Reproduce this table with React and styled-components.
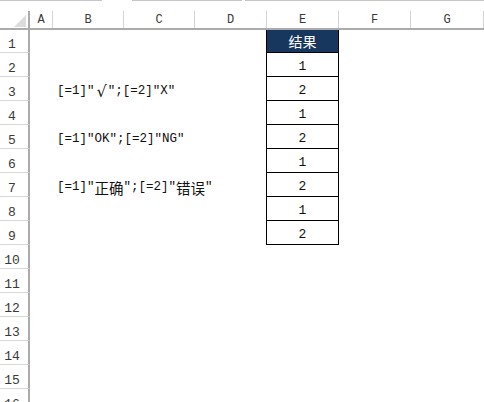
import React from 'react';
import styled, { createGlobalStyle } from 'styled-components';

const Global = createGlobalStyle`
  html, body { margin: 0; padding: 0; background: #fff; }
  body { overflow: hidden; }
  *, *::before, *::after { box-sizing: border-box; }
`;

const MONO = `"Liberation Mono", "Noto Sans CJK SC", monospace`;
const HEAD_COLS = '30px 23px 71px 71px 72px 72px 72px 73px';
const BODY_COLS = '30px 23px 71px 71px 71px 73px 72px 73px';

const Sheet = styled.div`
  width: 484px;
  height: 402px;
  overflow: hidden;
  display: flex;
  flex-direction: column;
  background: #fff;
  font-family: ${MONO};
`;

const TopStrip = styled.div`
  display: flex;
  height: 11px;
  flex: none;
`;

const StripSeg = styled.div`
  flex: ${(p) => (p.$w ? `0 0 ${p.$w}px` : '1')};
  height: 1px;
  background: ${(p) => (p.$on ? '#c6c6c6' : 'transparent')};
`;

const ColHeader = styled.div`
  display: grid;
  grid-template-columns: ${HEAD_COLS};
  height: 19px;
  flex: none;
  border-bottom: 2px solid #ababab;
`;

const Corner = styled.div`
  border-right: 2px solid #ababab;
  display: flex;
  justify-content: flex-end;
  align-items: flex-end;
  padding: 0 2px 1px 0;
`;

const HeadCell = styled.div`
  border-right: 1px solid #d4d4d4;
  display: flex;
  justify-content: center;
  align-items: flex-end;
  font-size: 12px;
  line-height: 12px;
  padding-bottom: 2px;
  color: #3a3a3a;
`;

const Row = styled.div`
  display: grid;
  grid-template-columns: ${BODY_COLS};
  height: ${(p) => p.$h}px;
  flex: none;
`;

const RowHead = styled.div`
  border-right: 2px solid #ababab;
  border-bottom: 1px solid #d9d9d9;
  display: flex;
  justify-content: center;
  align-items: flex-end;
  padding: 0 4px 1px 0;
  font-size: 13px;
  line-height: 13px;
  color: #3a3a3a;
`;

const Cell = styled.div`
  display: flex;
  align-items: flex-end;
  padding: 0 0 2px 4px;
  white-space: nowrap;
  font-size: 12.5px;
  line-height: 15px;
  color: #111;
  overflow: visible;
`;

const Han = styled.span`
  font-family: "Noto Sans CJK SC", sans-serif;
  font-size: 14.5px;
`;

const Check = styled.span`
  font-family: "DejaVu Sans", sans-serif;
  font-size: 16px;
  line-height: 15px;
  padding: 0 1px 0 2px;
`;

const TableCell = styled.div`
  border-left: 1px solid #000;
  border-right: 1px solid #000;
  border-bottom: 1px solid #000;
  background: ${(p) => (p.$head ? '#17375e' : '#fff')};
  color: ${(p) => (p.$head ? '#fff' : '#111')};
  display: flex;
  justify-content: center;
  align-items: flex-end;
  padding-bottom: ${(p) => (p.$head ? 2 : 3)}px;
  font-family: ${(p) => (p.$head ? '"Noto Sans CJK SC", sans-serif' : MONO)};
  font-size: ${(p) => (p.$head ? 14 : 13)}px;
  line-height: ${(p) => (p.$head ? 18 : 13)}px;
`;

const CornerMark = () => (
  <svg width="12" height="12" viewBox="0 0 12 12">
    <polygon points="12,0 12,12 0,12" fill="#dcdcdc" />
  </svg>
);

const texts = {
  3: (
    <>
      [=1]"<Check>√</Check>";[=2]"X"
    </>
  ),
  5: <>[=1]"OK";[=2]"NG"</>,
  7: (
    <>
      [=1]"<Han>正确</Han>";[=2]"<Han>错误</Han>"
    </>
  ),
};

const values = { 2: 1, 3: 2, 4: 1, 5: 2, 6: 1, 7: 2, 8: 1, 9: 2 };

export default function App() {
  const rows = Array.from({ length: 16 }, (_, i) => i + 1);
  return (
    <>
      <Global />
      <Sheet>
        <TopStrip>
          <StripSeg $w={102} $on />
          <StripSeg $w={30} />
          <StripSeg $w={110} $on />
          <StripSeg $w={3} />
          <StripSeg $on />
        </TopStrip>
        <ColHeader>
          <Corner>
            <CornerMark />
          </Corner>
          {['A', 'B', 'C', 'D', 'E', 'F', 'G'].map((c) => (
            <HeadCell key={c}>{c}</HeadCell>
          ))}
        </ColHeader>
        {rows.map((r) => (
          <Row key={r} $h={r === 1 ? 23 : 24}>
            <RowHead>{r}</RowHead>
            <Cell />
            <Cell>{texts[r] || null}</Cell>
            <Cell />
            <Cell />
            {r === 1 ? (
              <TableCell $head>结果</TableCell>
            ) : values[r] ? (
              <TableCell>{values[r]}</TableCell>
            ) : (
              <Cell />
            )}
            <Cell />
            <Cell />
          </Row>
        ))}
      </Sheet>
    </>
  );
}
